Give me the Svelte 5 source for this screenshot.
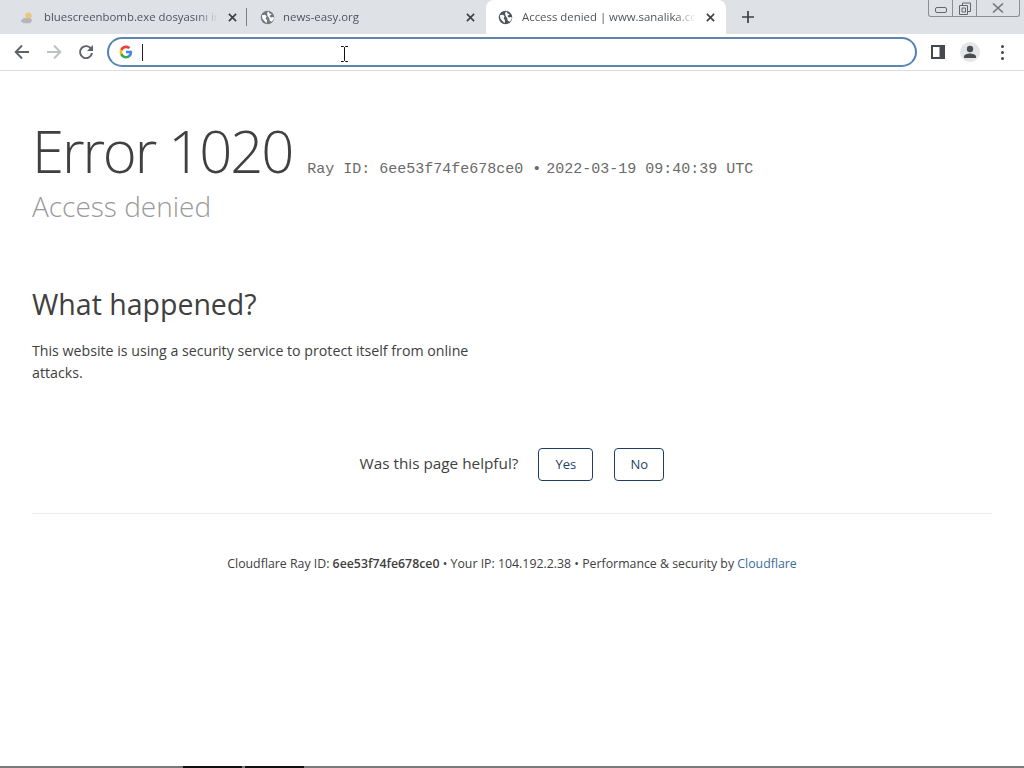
<script>
  const tabs = [
    { title: 'bluescreenbomb.exe dosyasını indir', icon: 'weather', width: 247, inset: false },
    { title: 'news-easy.org', icon: 'globe', width: 239, inset: true },
    { title: 'Access denied | www.sanalika.com', icon: 'globe', width: 240, active: true }
  ];
</script>

{#snippet globe(fill)}
  <svg class="favicon" viewBox="0 0 16 16">
    <circle cx="8" cy="8" r="7.2" fill={fill} />
    <path d="M2 5.5l3.5-.5 1.5 2-1 2 1.5 2-.5 3L4 11 2.5 9zM9 1.5l1 2 2.5 1L10 6.5l1.5 1.5 3-.5.2 2-2.2 3-2-1-.8-3L8 6l-.5-3z" fill="#fff" />
  </svg>
{/snippet}

<div class="window">
  <div class="tabstrip">
    {#each tabs as tab, i}
      <div class="tab" class:active={tab.active} class:inset={tab.inset} class:divided={i === 0} style="width: {tab.width}px">
        {#if tab.icon === 'globe'}
          {@render globe(tab.active ? '#4f5357' : '#74787c')}
        {:else}
          <svg class="favicon" viewBox="0 0 16 16">
            <circle cx="9" cy="6" r="3.4" fill="#e6c97c" />
            <path d="M1 12c1-3 4-4 6-3 2-1 5 0 6 2l-2 3H4z" fill="#b4b6b8" />
          </svg>
        {/if}
        <span class="tab-title">{tab.title}</span>
        <svg class="tab-close" viewBox="0 0 10 10">
          <path d="M1 1l8 8M9 1l-8 8" stroke="#3c4043" stroke-width="1.8" fill="none" />
        </svg>
      </div>
    {/each}
    <svg class="new-tab" viewBox="0 0 12 12">
      <path d="M6 0v12M0 6h12" stroke="#3c4043" stroke-width="1.7" fill="none" />
    </svg>
    <div class="win-controls">
      <div class="win-btn min"><span class="min-glyph"></span></div>
      <div class="win-btn restore">
        <svg viewBox="0 0 12 13" width="12" height="13">
          <path d="M3.5 3V1h8v8.5H9M.5 3.5h8v9h-8zM3 6h3.5v4H3z" stroke="#666" fill="none" />
        </svg>
      </div>
      <div class="win-btn close">
        <svg viewBox="0 0 12 10" width="12" height="10">
          <path d="M1 .5l10 9M11 .5l-10 9" stroke="#777" stroke-width="1.6" fill="none" />
        </svg>
      </div>
    </div>
  </div>

  <div class="toolbar">
    <svg class="nav" viewBox="0 0 16 16">
      <path d="M15 8H2M8 1.5L1.7 8 8 14.5" stroke="#5f6368" stroke-width="1.9" fill="none" />
    </svg>
    <svg class="nav forward" viewBox="0 0 16 16">
      <path d="M1 8h13M8 1.5L14.3 8 8 14.5" stroke="#bcbfc3" stroke-width="1.9" fill="none" />
    </svg>
    <svg class="nav reload" viewBox="0 0 16 16">
      <path d="M13.3 5.2A6 6 0 1 0 14 9" stroke="#5f6368" stroke-width="1.9" fill="none" />
      <path d="M15 1v6H9z" fill="#5f6368" />
    </svg>
    <div class="omnibox">
      <svg class="g-logo" viewBox="0 0 48 48">
        <path fill="#4285f4" d="M45 24.5c0-1.6-.1-3.100-.4-4.500H24v8.500h11.800c-.5 2.800-2 5.100-4.400 6.700v5.500h7.100C42.700 36.800 45 31.200 45 24.500z" />
        <path fill="#34a853" d="M24 46c5.900 0 10.900-2 14.500-5.300l-7.100-5.500c-2 1.300-4.500 2.100-7.400 2.100-5.700 0-10.500-3.800-12.200-9H4.500v5.700C8.100 41.100 15.500 46 24 46z" />
        <path fill="#fbbc05" d="M11.800 28.300c-.4-1.300-.7-2.800-.7-4.300s.3-3 .7-4.300V14H4.500C3 17 2 20.400 2 24s1 7 2.500 10z" />
        <path fill="#ea4335" d="M24 10.800c3.200 0 6.100 1.100 8.400 3.300l6.300-6.300C34.900 4.200 29.900 2 24 2 15.500 2 8.100 6.900 4.500 14l7.300 5.700c1.700-5.200 6.500-8.900 12.200-8.900z" />
      </svg>
      <span class="caret"></span>
    </div>
    <svg class="side-panel" viewBox="0 0 14 14">
      <path d="M1 1h12v12H1z" fill="none" stroke="#45484c" stroke-width="2" />
      <path d="M8.500 1H13v12H8.500z" fill="#45484c" />
    </svg>
    <div class="avatar">
      <svg viewBox="0 0 16 16" width="16" height="16">
        <circle cx="8" cy="5" r="3.200" fill="#4a4d51" />
        <path d="M2 14v-1.500C2 10.500 5.500 9.500 8 9.500s6 1 6 3V14z" fill="#4a4d51" />
      </svg>
    </div>
    <div class="menu-dots"><span></span><span></span><span></span></div>
  </div>

  <main class="page">
    <header class="error-head">
      <div class="error-line">
        <h1>Error 1020</h1>
        <span class="ray">Ray ID: 6ee53f74fe678ce0 <span class="bullet">•</span>2022-03-19 09:40:39 UTC</span>
      </div>
      <h2>Access denied</h2>
    </header>

    <section class="what">
      <h3>What happened?</h3>
      <p>This website is using a security service to protect itself from online attacks.</p>
    </section>

    <div class="helpful">
      <span class="helpful-label">Was this page helpful?</span>
      <button class="yes">Yes</button>
      <button class="no">No</button>
    </div>

    <footer>
      Cloudflare Ray ID: <strong>6ee53f74fe678ce0</strong> • Your IP: 104.192.2.38 • Performance &amp; security by <a href="#top">Cloudflare</a>
    </footer>
  </main>

  <div class="bottom-edge"><span></span><span></span></div>

  <svg class="ibeam" viewBox="0 0 9 16">
    <path d="M1 .5h2.500l1 1 1-1H8M4.500 1.500v13M1 15.500h2.500l1-1 1 1H8" stroke="#111" fill="none" />
  </svg>
</div>

<style>
  :global(body) {
    margin: 0;
    background: #fff;
  }

  .window {
    position: relative;
    height: 768px;
    overflow: hidden;
    display: flex;
    flex-direction: column;
    font-family: "Open Sans", "Liberation Sans", sans-serif;
    color: #404040;
  }

  .tabstrip {
    position: relative;
    height: 34px;
    flex: none;
    display: flex;
    align-items: flex-end;
    background: #dee1e6;
  }

  .tab {
    height: 34px;
    flex: none;
    box-sizing: border-box;
    display: flex;
    align-items: center;
    padding: 0 10px 0 20px;
    position: relative;
    font-size: 11.4px;
    color: #50545a;
  }

  .tab.inset {
    padding-left: 13px;
    padding-right: 11px;
  }

  .tab.inset .favicon {
    margin-right: 8px;
  }

  .tab.active {
    background: #fff;
    border-radius: 8px 8px 0 0;
    padding-left: 12px;
    padding-right: 11px;
  }

  .tab.divided::after {
    content: "";
    position: absolute;
    right: 0;
    top: 8px;
    height: 18px;
    width: 1px;
    background: #7d8085;
  }

  .favicon {
    width: 15px;
    height: 15px;
    flex: none;
    margin-right: 9px;
  }

  .tab-title {
    flex: 1;
    min-width: 0;
    padding-bottom: 2px;
    overflow: hidden;
    white-space: nowrap;
    -webkit-mask-image: linear-gradient(to right, #000 88%, transparent);
    mask-image: linear-gradient(to right, #000 88%, transparent);
  }

  .tab-close {
    width: 9px;
    height: 9px;
    flex: none;
    margin-left: 10px;
  }

  .new-tab {
    width: 12px;
    height: 12px;
    margin: 0 0 11px 16px;
  }

  .win-controls {
    position: absolute;
    top: 0;
    right: 4px;
    display: flex;
    height: 16px;
    border: 1px solid #8b8e93;
    border-top: none;
    border-radius: 0 0 3px 3px;
  }

  .win-btn {
    display: flex;
    align-items: center;
    justify-content: center;
    border-right: 1px solid #8b8e93;
  }

  .win-btn.min {
    width: 23px;
  }

  .win-btn.restore {
    width: 23px;
  }

  .win-btn.close {
    width: 42px;
    border-right: none;
  }

  .min-glyph {
    width: 10px;
    height: 4px;
    margin-top: 4px;
    border: 1px solid #666;
    border-radius: 2px;
  }

  .toolbar {
    height: 37px;
    flex: none;
    box-sizing: border-box;
    display: flex;
    align-items: center;
    background: #fff;
    border-bottom: 1px solid #dadce0;
    padding-left: 14px;
  }

  .nav {
    width: 16px;
    height: 16px;
    flex: none;
    margin-right: 16px;
  }

  .nav.reload {
    margin-right: 13px;
  }

  .omnibox {
    width: 810px;
    height: 30px;
    flex: none;
    box-sizing: border-box;
    display: flex;
    align-items: center;
    border: 2px solid #5c86ad;
    border-left-color: #4f7ec4;
    border-right-color: #4f7ec4;
    border-radius: 15px;
    padding-left: 10px;
  }

  .g-logo {
    width: 14px;
    height: 14px;
    margin-right: 9px;
  }

  .caret {
    width: 1px;
    height: 17px;
    background: #222;
  }

  .side-panel {
    width: 14px;
    height: 14px;
    flex: none;
    margin-left: 14px;
  }

  .avatar {
    width: 20px;
    height: 20px;
    flex: none;
    margin-left: 15px;
    border-radius: 50%;
    background: #e3e5e8;
    display: flex;
    align-items: center;
    justify-content: center;
  }

  .menu-dots {
    margin-left: 21px;
    display: flex;
    flex-direction: column;
    gap: 3px;
  }

  .menu-dots span {
    width: 3px;
    height: 3px;
    border-radius: 50%;
    background: #45484c;
  }

  .page {
    flex: 1;
    padding: 0 32px;
  }

  .error-head {
    margin-top: 40px;
  }

  .error-line {
    display: flex;
    align-items: baseline;
    height: 80px;
  }

  h1 {
    margin: 0;
    font-size: 58px;
    line-height: 80px;
    font-weight: 300;
    letter-spacing: -2.1px;
    color: #404040;
  }

  .ray {
    margin-left: 15px;
    font-family: "Liberation Mono", monospace;
    font-size: 15px;
    color: #6a6a6a;
    white-space: nowrap;
  }

  .bullet {
    margin-right: 5px;
  }

  h2 {
    margin: -1px 0 0;
    font-size: 28px;
    line-height: 33px;
    font-weight: 300;
    color: #9a9a9a;
  }

  .what {
    margin-top: 61px;
    width: 470px;
  }

  h3 {
    margin: 0;
    font-size: 28.5px;
    line-height: 40px;
    font-weight: 400;
    color: #404040;
  }

  p {
    margin: 16px 0 0;
    font-size: 14.2px;
    line-height: 22px;
    color: #404040;
  }

  .helpful {
    margin-top: 64px;
    display: flex;
    align-items: center;
    justify-content: center;
    height: 33px;
    padding-bottom: 32px;
    border-bottom: 1px solid #ececec;
  }

  .helpful-label {
    font-size: 15.3px;
    padding-bottom: 3px;
    color: #404040;
    margin-right: 20px;
  }

  button {
    height: 33px;
    box-sizing: border-box;
    background: #fff;
    border: 1px solid #1d3f63;
    border-radius: 4px;
    font-family: inherit;
    font-size: 13px;
    color: #1d3f63;
    padding: 0 0 2px;
  }

  .yes {
    width: 55px;
    margin-right: 21px;
  }

  .no {
    width: 50px;
  }

  footer {
    margin-top: 41px;
    text-align: center;
    font-size: 12.33px;
    line-height: 18px;
    color: #404040;
  }

  strong {
    font-weight: 600;
  }

  a {
    color: #3b6d94;
    text-decoration: none;
  }

  .bottom-edge {
    position: absolute;
    left: 0;
    right: 0;
    bottom: 0;
    height: 2px;
    background: #77797b;
    display: flex;
    padding-left: 183px;
    gap: 3px;
  }

  .bottom-edge span {
    width: 59px;
    background: #111;
  }

  .ibeam {
    position: absolute;
    left: 340px;
    top: 46px;
    width: 9px;
    height: 16px;
  }
</style>
